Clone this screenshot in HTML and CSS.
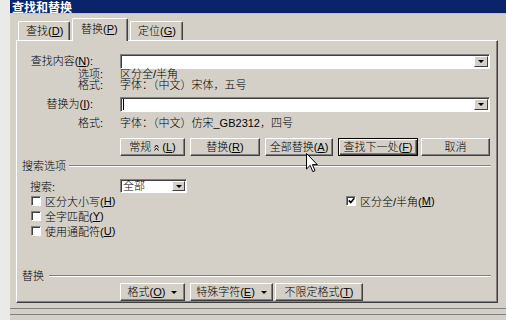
FILE: index.html
```html
<!DOCTYPE html>
<html>
<head>
	<meta charset="utf-8">
	<title>查找和替换</title>
	<link rel="stylesheet" href="styles.css">
</head>
<body>
	<div class="window">
		<div class="titlebar">查找和替换</div>

		<div class="tabs">
			<div class="tab tab-find">查找(<u>D</u>)</div>
			<div class="tab tab-replace active">替换(<u>P</u>)</div>
			<div class="tab tab-goto">定位(<u>G</u>)</div>
		</div>

		<div class="panel">
			<div class="field-row first">
				<label class="lbl">查找内容(<u>N</u>):</label>
				<div class="combo"><span class="drop"></span></div>
			</div>
			<div class="info">
				<div class="info-row"><span class="sublbl">选项:</span><span>区分全/半角</span></div>
				<div class="info-row"><span class="sublbl">格式:</span><span>字体：（中文）宋体，五号</span></div>
			</div>

			<div class="field-row second">
				<label class="lbl">替换为(<u>I</u>):</label>
				<div class="combo"><span class="caret"></span><span class="drop"></span></div>
			</div>
			<div class="info-row fmt2"><span class="sublbl">格式:</span><span>字体：（中文）仿宋_GB2312，四号</span></div>

			<div class="actions">
				<button class="btn w-less">常规 <svg class="chev" width="5" height="7" viewBox="0 0 5 7"><polyline points="0.5,3.5 2.5,1 4.5,3.5" /><polyline points="0.5,6.5 2.5,4 4.5,6.5" /></svg> (<u>L</u>)</button>
				<button class="btn w-replace">替换(<u>R</u>)</button>
				<button class="btn w-all">全部替换(<u>A</u>)</button>
				<button class="btn btn-default w-next">查找下一处(<u>F</u>)</button>
				<button class="btn w-cancel">取消</button>
			</div>

			<div class="group"><span>搜索选项</span><span class="rule"></span></div>

			<div class="search-row">
				<span class="search-lbl">搜索:</span>
				<div class="select">全部<span class="drop"></span></div>
			</div>

			<div class="options">
				<div class="opt-col">
					<div class="check"><span class="box"></span>区分大小写(<u>H</u>)</div>
					<div class="check"><span class="box"></span>全字匹配(<u>Y</u>)</div>
					<div class="check"><span class="box"></span>使用通配符(<u>U</u>)</div>
				</div>
				<div class="opt-col right">
					<div class="check"><span class="box"><svg width="7" height="7" viewBox="0 0 7 7"><polyline points="0.8,3.4 2.8,5.6 6.3,1.2" /></svg></span>区分全/半角(<u>M</u>)</div>
				</div>
			</div>

			<div class="group replace-group"><span>替换</span><span class="rule"></span></div>

			<div class="actions bottom">
				<button class="btn w-format">格式(<u>O</u>) <span class="arrow"></span></button>
				<button class="btn w-special">特殊字符(<u>E</u>) <span class="arrow"></span></button>
				<button class="btn w-clear">不限定格式(<u>T</u>)</button>
			</div>
		</div>

		<div class="footer"></div>
	</div>

	<!-- mouse pointer over 全部替换 -->
	<svg class="cursor" width="12" height="20" viewBox="0 0 12 20">
		<path d="M0.5,0.5 L0.5,16 L4.2,12.4 L6.8,18.6 L9,17.7 L6.4,11.6 L11.3,11.6 Z" />
	</svg>
</body>
</html>
```

FILE: styles.css
```css
* {
  box-sizing: border-box;
}

body {
  margin: 0;
  width: 506px;
  height: 320px;
  overflow: hidden;
  position: relative;
  background: #eaeae8;
  font-family: "Liberation Sans", "Noto Sans CJK SC", sans-serif;
  font-size: 11px;
  font-weight: 300;
  color: #000;
}

u {
  text-decoration-thickness: 1px;
}

.window {
  margin-left: 10px;
  height: 320px;
  background: #d4d0c8;
}

.titlebar {
  height: 14px;
  line-height: 14px;
  padding-left: 2px;
  background: #0a246a;
  border-bottom: 1px solid #b8bfe0;
  color: #fff;
  font-family: "Noto Sans CJK SC", sans-serif;
  font-size: 12px;
  font-weight: bold;
}

/* tabs */
.tabs {
  display: flex;
  align-items: flex-end;
  height: 22px;
  margin-top: 4px;
  padding-left: 8px;
}

.tab {
  height: 19px;
  line-height: 19px;
  margin-right: 2px;
  padding-left: 7px;
  border: 1px solid;
  border-color: #fff #404040 transparent #fff;
  border-bottom: none;
  border-radius: 2px 2px 0 0;
  box-shadow: inset -1px 0 #808080;
}

.tab-find { width: 52px; }
.tab-replace { width: 56px; }
.tab-goto { width: 53px; }

.tab.active {
  position: relative;
  z-index: 1;
  height: 23px;
  line-height: 20px;
  margin-bottom: -1px;
  padding-left: 8px;
  background: #d4d0c8;
}

/* page */
.panel {
  margin-left: 6px;
  width: 482px;
  height: 263px;
  border: 1px solid;
  border-color: #fff #404040 #404040 #fff;
  box-shadow: inset -1px -1px #808080;
}

.field-row {
  display: flex;
  align-items: center;
  height: 15px;
}

.field-row.first { margin-top: 13px; }
.field-row.second { margin-top: 6px; }

.lbl {
  width: 103px;
  padding-right: 27px;
  text-align: right;
  line-height: 15px;
}

.combo, .select {
  display: flex;
  align-items: center;
  background: #fff;
  border: 1px solid;
  border-color: #808080 #fff #fff #808080;
  box-shadow: inset 1px 1px #404040;
}

.combo {
  width: 370px;
  height: 15px;
}

.caret {
  width: 1px;
  height: 11px;
  margin-left: 2px;
  background: #000;
}

.drop {
  display: flex;
  align-items: center;
  justify-content: center;
  width: 14px;
  height: 11px;
  margin-left: auto;
  margin-right: 1px;
  background: #d4d0c8;
  border: 1px solid;
  border-color: #fff #404040 #404040 #fff;
}

.drop::after, .arrow {
  content: "";
  border-left: 3px solid transparent;
  border-right: 3px solid transparent;
  border-top: 3px solid #000;
}

.info-row {
  display: flex;
  height: 11px;
  line-height: 11px;
}

.sublbl {
  width: 103px;
  padding-right: 17px;
  text-align: right;
}

.fmt2 {
  margin-top: 6px;
}

/* buttons */
.actions {
  display: flex;
  height: 18px;
  margin-top: 9px;
  padding-left: 103px;
}

.actions.bottom { margin-top: 1px; }

.btn {
  display: flex;
  align-items: center;
  justify-content: center;
  height: 18px;
  margin-right: 5px;
  padding: 0;
  font: inherit;
  line-height: 15px;
  color: #000;
  background: #d4d0c8;
  border: 1px solid;
  border-color: #fff #404040 #404040 #fff;
  box-shadow: inset -1px -1px #808080;
}

.btn-default {
  border: 1px solid #000;
  box-shadow: inset 1px 1px #fff, inset -1px -1px #404040, inset -2px -2px #808080;
}

.chev {
  margin: 0 3px;
  fill: none;
  stroke: #000;
  stroke-width: 1;
}

.arrow {
  margin-left: 6px;
}

.w-less { width: 65px; }
.w-replace { width: 70px; }
.w-all { width: 68px; }
.w-next { width: 80px; margin-right: 3px; }
.w-cancel { width: 69px; }
.w-format { width: 65px; }
.w-special { width: 83px; margin-right: 2px; }
.w-clear { width: 88px; }

/* group captions */
.group {
  display: flex;
  align-items: center;
  height: 12px;
  line-height: 12px;
  margin-top: 4px;
  padding-left: 5px;
  padding-right: 6px;
}

.rule {
  flex: 1;
  height: 2px;
  margin-left: 3px;
  border-top: 1px solid #808080;
  border-bottom: 1px solid #fff;
}

.replace-group { margin-top: 32px; }
.replace-group .rule { margin-left: 5px; }

/* search options */
.search-row {
  display: flex;
  align-items: center;
  height: 14px;
  margin-top: 7px;
}

.search-lbl {
  width: 103px;
  padding-left: 13px;
}

.select {
  width: 67px;
  height: 14px;
  padding-left: 2px;
  line-height: 12px;
}

.select .drop {
  width: 13px;
  height: 10px;
}

.options {
  display: flex;
}

.opt-col { width: 329px; }
.opt-col.right { width: auto; }

.check {
  display: flex;
  align-items: center;
  height: 15px;
  padding-left: 14px;
}

.right .check { padding-left: 0; }

.box {
  display: flex;
  align-items: center;
  justify-content: center;
  width: 10px;
  height: 10px;
  margin-right: 4px;
  background: #fff;
  border: 1px solid;
  border-color: #808080 #fff #fff #808080;
  box-shadow: inset 1px 1px #404040;
}

.box svg {
  fill: none;
  stroke: #000;
  stroke-width: 1.6;
}

.footer {
  height: 7px;
  margin-top: 5px;
  border-top: 1px solid #808080;
  border-bottom: 1px solid #808080;
}

.cursor {
  position: absolute;
  left: 306px;
  top: 153px;
  fill: #fff;
  stroke: #000;
  stroke-width: 1;
}
```
